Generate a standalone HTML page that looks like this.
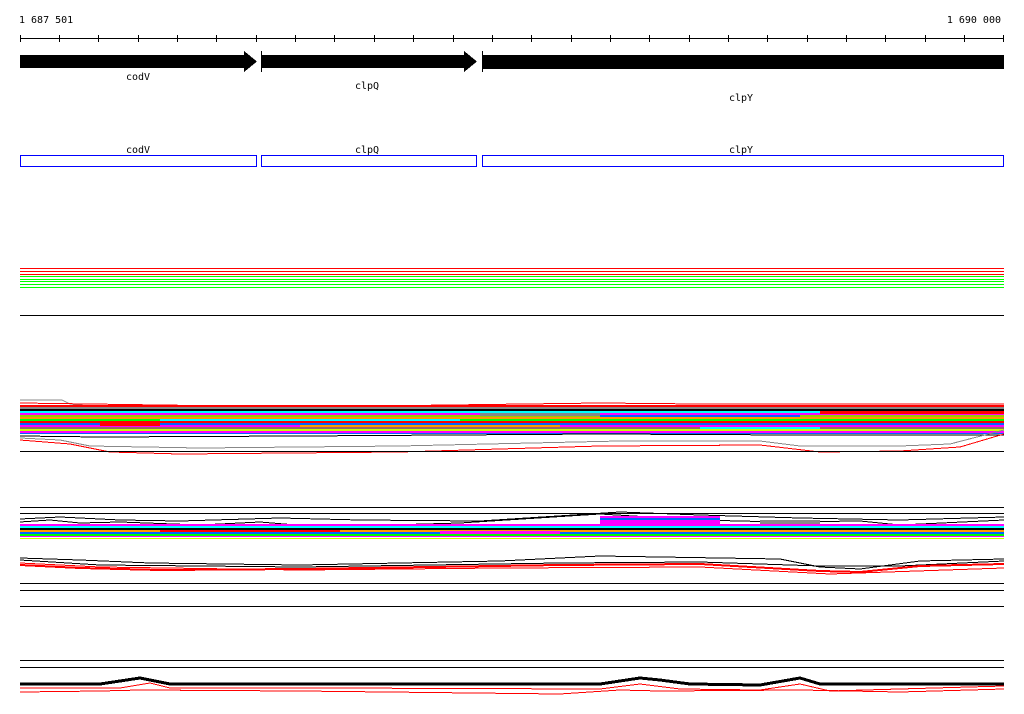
<!DOCTYPE html>
<html><head><meta charset="utf-8"><style>
html,body{margin:0;padding:0;background:#fff;width:1024px;height:714px;overflow:hidden}
svg{display:block}
text{font-family:"DejaVu Sans Mono","Liberation Mono",monospace;font-size:10px;fill:#000}
</style></head><body>
<svg width="1024" height="714" viewBox="0 0 1024 714" xmlns="http://www.w3.org/2000/svg" shape-rendering="crispEdges">
<text x="19" y="23">1 687 501</text>
<text x="1001" y="23" text-anchor="end">1 690 000</text>
<line x1="20" y1="38.5" x2="1004" y2="38.5" stroke="#000"/>
<g stroke="#000">
<line x1="20.5" y1="35" x2="20.5" y2="42"/><line x1="59.5" y1="35" x2="59.5" y2="42"/><line x1="98.5" y1="35" x2="98.5" y2="42"/><line x1="138.5" y1="35" x2="138.5" y2="42"/><line x1="177.5" y1="35" x2="177.5" y2="42"/><line x1="216.5" y1="35" x2="216.5" y2="42"/><line x1="256.5" y1="35" x2="256.5" y2="42"/><line x1="295.5" y1="35" x2="295.5" y2="42"/><line x1="334.5" y1="35" x2="334.5" y2="42"/><line x1="374.5" y1="35" x2="374.5" y2="42"/><line x1="413.5" y1="35" x2="413.5" y2="42"/><line x1="453.5" y1="35" x2="453.5" y2="42"/><line x1="492.5" y1="35" x2="492.5" y2="42"/><line x1="531.5" y1="35" x2="531.5" y2="42"/><line x1="571.5" y1="35" x2="571.5" y2="42"/><line x1="610.5" y1="35" x2="610.5" y2="42"/><line x1="649.5" y1="35" x2="649.5" y2="42"/><line x1="689.5" y1="35" x2="689.5" y2="42"/><line x1="728.5" y1="35" x2="728.5" y2="42"/><line x1="767.5" y1="35" x2="767.5" y2="42"/><line x1="807.5" y1="35" x2="807.5" y2="42"/><line x1="846.5" y1="35" x2="846.5" y2="42"/><line x1="885.5" y1="35" x2="885.5" y2="42"/><line x1="925.5" y1="35" x2="925.5" y2="42"/><line x1="964.5" y1="35" x2="964.5" y2="42"/><line x1="1003.5" y1="35" x2="1003.5" y2="42"/>
</g>
<polygon points="20,55 244,55 244,51 257,61.5 244,72 244,68 20,68" fill="#000"/>
<line x1="261.5" y1="51" x2="261.5" y2="72" stroke="#000"/>
<polygon points="262,55 464,55 464,51 477,61.5 464,72 464,68 262,68" fill="#000"/>
<line x1="482.5" y1="51" x2="482.5" y2="72" stroke="#000"/>
<rect x="483" y="55" width="521" height="14" fill="#000"/>
<text x="138" y="80" text-anchor="middle">codV</text>
<text x="367" y="89" text-anchor="middle">clpQ</text>
<text x="741" y="101" text-anchor="middle">clpY</text>
<text x="138" y="153" text-anchor="middle">codV</text>
<text x="367" y="153" text-anchor="middle">clpQ</text>
<text x="741" y="153" text-anchor="middle">clpY</text>
<g fill="none" stroke="#0000ff">
<rect x="20.5" y="155.5" width="236" height="11"/><rect x="261.5" y="155.5" width="215" height="11"/><rect x="482.5" y="155.5" width="521" height="11"/>
</g>
<g stroke-width="1">
<line x1="20" y1="268.5" x2="1004" y2="268.5" stroke="#f00"/><line x1="20" y1="271.5" x2="1004" y2="271.5" stroke="#f00"/><line x1="20" y1="274.5" x2="1004" y2="274.5" stroke="#f00"/>
<line x1="20" y1="276.5" x2="1004" y2="276.5" stroke="#0f0"/><line x1="20" y1="279.5" x2="1004" y2="279.5" stroke="#0f0"/><line x1="20" y1="281.5" x2="1004" y2="281.5" stroke="#0f0"/><line x1="20" y1="284.5" x2="1004" y2="284.5" stroke="#0f0"/><line x1="20" y1="287.5" x2="1004" y2="287.5" stroke="#0f0"/>
<line x1="20" y1="315.5" x2="1004" y2="315.5" stroke="#000"/>
</g>
<!-- band 1 -->
<polyline fill="none" stroke="#888" points="20,400 62,400 70,404 100,407 1004,407"/>
<polyline fill="none" stroke="#f00" points="20,403 160,405 300,407 600,403 700,404 1004,404"/>
<g>
<rect x="20" y="405" width="984" height="2" fill="#f00"/>
<rect x="20" y="407" width="984" height="2" fill="#888"/>
<rect x="20" y="409" width="984" height="2" fill="#000"/>
<rect x="20" y="411" width="984" height="2" fill="#0ff"/>
<rect x="20" y="413" width="984" height="2" fill="#f0f"/>
<rect x="20" y="415" width="984" height="2" fill="#9c0"/>
<rect x="20" y="417" width="984" height="2" fill="#f90"/>
<rect x="20" y="419" width="984" height="2" fill="#0f0"/>
<rect x="20" y="421" width="984" height="2" fill="#f00"/>
<rect x="20" y="423" width="984" height="2" fill="#06f"/>
<rect x="20" y="425" width="984" height="2" fill="#f0f"/>
<rect x="20" y="427" width="984" height="2" fill="#966"/>
<rect x="20" y="429" width="984" height="2" fill="#cf0"/>
<rect x="20" y="431" width="984" height="2" fill="#f0f"/>
<rect x="20" y="433" width="984" height="1" fill="#06f"/>
<rect x="160" y="419" width="300" height="2" fill="#0ff"/>
<rect x="600" y="415" width="200" height="2" fill="#06f"/>
<rect x="300" y="425" width="260" height="2" fill="#f90"/>
<rect x="820" y="411" width="184" height="3" fill="#f00"/>
<rect x="480" y="413" width="120" height="3" fill="#888"/>
<rect x="100" y="423" width="60" height="3" fill="#f00"/>
<rect x="700" y="427" width="120" height="2" fill="#0ff"/>
</g>
<polyline fill="none" stroke="#000" points="20,436 100,437 300,436 600,434 800,435 1004,435"/>
<polyline fill="none" stroke="#888" points="20,438 60,440 90,446 200,448 400,446 620,441 760,441 800,446 900,446 950,444 1004,430"/>
<polyline fill="none" stroke="#f00" points="20,440 70,444 110,452 180,454 400,452 600,446 760,445 820,452 900,451 960,447 1004,434"/>
<line x1="20" y1="451.5" x2="1004" y2="451.5" stroke="#000"/>
<line x1="20" y1="507.5" x2="1004" y2="507.5" stroke="#000"/>
<line x1="20" y1="513.5" x2="1004" y2="513.5" stroke="#000"/>
<!-- band 2 -->
<polyline fill="none" stroke="#000" points="20,522 50,520 80,523 120,522 200,525 260,522 320,527 460,523 600,514 700,520 780,522 860,521 900,525 1004,520"/>
<polyline fill="none" stroke="#000" points="20,519 60,517 120,520 180,521 280,518 360,520 480,521 620,512 700,515 800,518 900,520 1004,517"/>
<g>
<rect x="20" y="524" width="984" height="2" fill="#f0f"/>
<rect x="20" y="526" width="984" height="2" fill="#0ff"/>
<rect x="20" y="528" width="984" height="2" fill="#000"/>
<rect x="20" y="530" width="984" height="2" fill="#f90"/>
<rect x="20" y="532" width="984" height="2" fill="#06f"/>
<rect x="20" y="534" width="984" height="2" fill="#0f0"/>
<rect x="20" y="536" width="984" height="1" fill="#f0f"/>
<rect x="20" y="538" width="984" height="1" fill="#cf0"/>
<rect x="600" y="516" width="120" height="8" fill="#f0f"/>
<rect x="600" y="518" width="120" height="2" fill="#06f"/>
<rect x="160" y="530" width="180" height="2" fill="#f00"/>
<rect x="760" y="520" width="60" height="4" fill="#888"/>
<rect x="440" y="531" width="120" height="3" fill="#f0f"/>
</g>
<polyline fill="none" stroke="#000" points="20,558 80,560 150,563 300,565 500,561 600,556 780,559 820,567 860,569 920,561 1004,559"/>
<polyline fill="none" stroke="#000" points="20,560 100,565 300,567 560,563 700,562 820,566 900,566 1004,561"/>
<polyline fill="none" stroke="#f00" stroke-width="2" points="20,565 80,568 160,570 300,569 560,565 700,564 820,571 860,572 920,566 1004,564"/>
<polyline fill="none" stroke="#f00" points="20,563 100,567 300,570 500,568 700,567 830,574 1004,568"/>
<line x1="20" y1="583.5" x2="1004" y2="583.5" stroke="#000"/>
<line x1="20" y1="590.5" x2="1004" y2="590.5" stroke="#000"/>
<line x1="20" y1="606.5" x2="1004" y2="606.5" stroke="#000"/>
<line x1="20" y1="660.5" x2="1004" y2="660.5" stroke="#000"/>
<line x1="20" y1="667.5" x2="1004" y2="667.5" stroke="#000"/>
<polyline fill="none" stroke="#000" stroke-width="3" points="20,684 100,684 140,678 170,684 300,684 600,684 640,678 660,680 690,684 760,685 800,678 820,684 1004,684"/>
<polyline fill="none" stroke="#f00" points="20,688 120,688 150,683 170,688 320,688 600,689 640,684 680,689 760,690 800,684 830,691 1004,686"/>
<polyline fill="none" stroke="#f00" points="20,692 100,691 140,690 300,691 560,694 620,690 660,691 800,690 900,692 1004,689"/>
</svg>
</body></html>
